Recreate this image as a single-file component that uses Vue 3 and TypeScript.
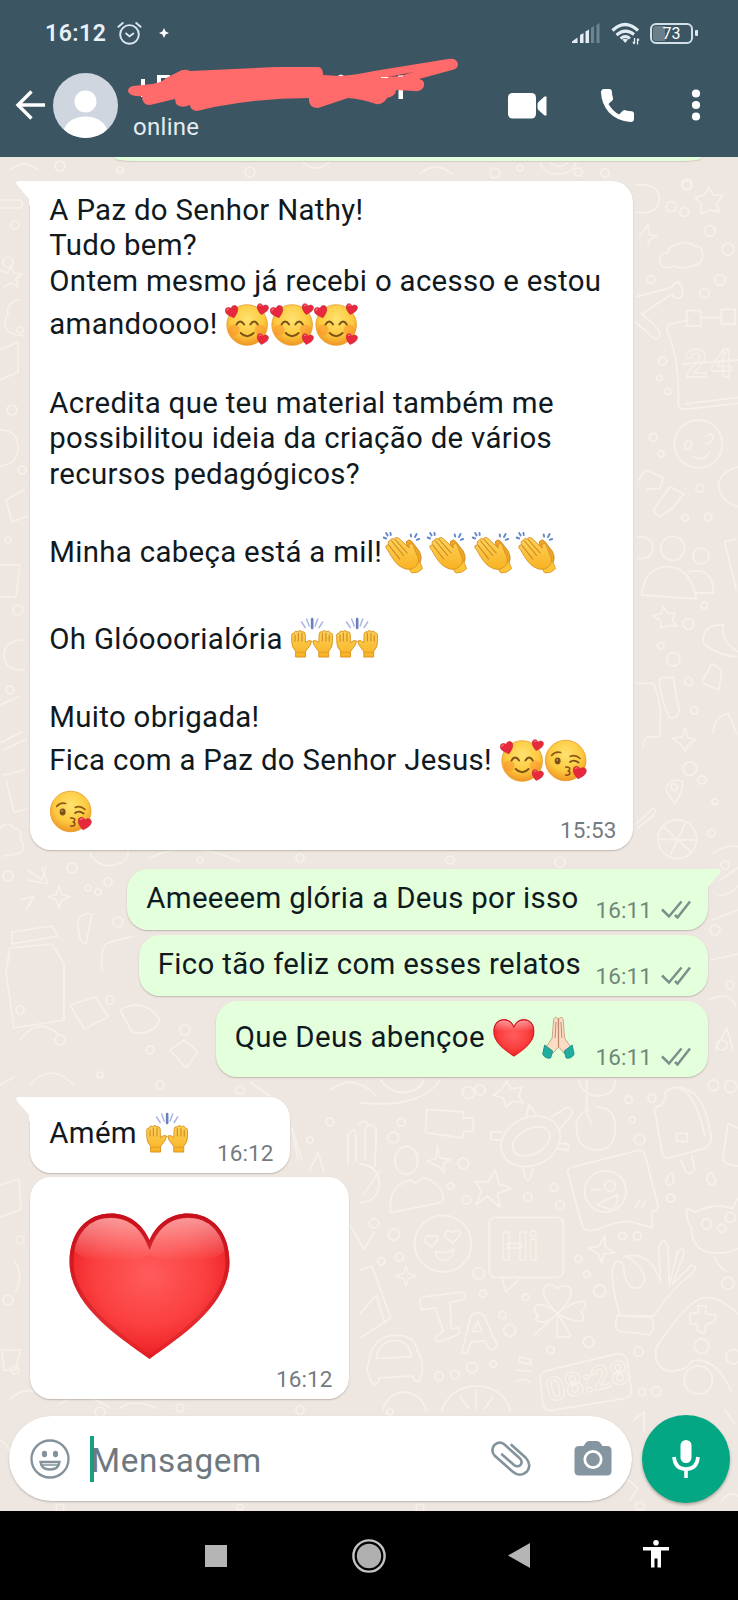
<script setup lang="ts">
type Emoji = 'love' | 'kiss' | 'clap' | 'raise' | 'heart' | 'pray'
interface Line {
  text?: string
  emojis?: Emoji[]
  tight?: boolean
}
interface Message {
  id: string
  out: boolean
  tail: boolean
  time: string
  lines: Line[]
}

const messages: Message[] = [
  {
    id: 'm1', out: false, tail: true, time: '15:53',
    lines: [
      { text: 'A Paz do Senhor Nathy!' },
      { text: 'Tudo bem?' },
      { text: 'Ontem mesmo já recebi o acesso e estou' },
      { text: 'amandoooo!', emojis: ['love', 'love', 'love'] },
      {},
      { text: 'Acredita que teu material também me' },
      { text: 'possibilitou ideia da criação de vários' },
      { text: 'recursos pedagógicos?' },
      {},
      { text: 'Minha cabeça está a mil!', emojis: ['clap', 'clap', 'clap', 'clap'], tight: true },
      {},
      { text: 'Oh Glóooorialória', emojis: ['raise', 'raise'] },
      {},
      { text: 'Muito obrigada!' },
      { text: 'Fica com a Paz do Senhor Jesus!', emojis: ['love', 'kiss'] },
      { emojis: ['kiss'], tight: true },
    ],
  },
  { id: 'm2', out: true, tail: true, time: '16:11', lines: [{ text: 'Ameeeem glória a Deus por isso' }] },
  { id: 'm3', out: true, tail: false, time: '16:11', lines: [{ text: 'Fico tão feliz com esses relatos' }] },
  { id: 'm4', out: true, tail: false, time: '16:11', lines: [{ text: 'Que Deus abençoe', emojis: ['heart', 'pray'] }] },
  { id: 'm5', out: false, tail: true, time: '16:12', lines: [{ text: 'Amém', emojis: ['raise'] }] },
]

const dots: [number, number, number][] = [
  [15, 225, 4], [8, 262, 5], [20, 330, 3], [12, 410, 5], [22, 470, 4], [8, 540, 3], [18, 610, 5], [10, 690, 4],
  [72, 868, 5], [8, 876, 5], [108, 882, 4], [88, 888, 3], [98, 892, 3], [118, 922, 5], [20, 1010, 4], [60, 1040, 5],
  [110, 1000, 4], [150, 1050, 4], [185, 1030, 5], [100, 1075, 3], [160, 1085, 4], [240, 1090, 4], [330, 1122, 4],
  [310, 1140, 3], [15, 1370, 4], [8, 1300, 5], [20, 1240, 4], [60, 166, 5], [120, 170, 3], [250, 172, 5],
  [495, 173, 5], [520, 168, 3], [578, 172, 4], [605, 173, 4], [687, 184, 5], [725, 865, 4], [715, 930, 5],
  [730, 985, 4], [722, 1045, 5], [450, 860, 4], [200, 860, 3], [300, 858, 4], [560, 862, 5], [480, 1090, 5],
  [100, 1412, 5], [180, 1408, 4], [300, 1410, 4], [390, 1412, 3], [60, 1508, 4], [240, 1507, 3], [420, 1508, 4], [640, 1506, 4],
]
</script>

<template>
  <div class="screen">
    <svg class="defs" width="0" height="0" aria-hidden="true">
      <defs>
        <radialGradient id="gFace" cx=".5" cy=".35" r=".68">
          <stop offset="0" stop-color="#ffe370" /><stop offset=".6" stop-color="#fdc93f" /><stop offset="1" stop-color="#ee8f22" />
        </radialGradient>
        <linearGradient id="gHand" x1="0" y1="0" x2="0" y2="1">
          <stop offset="0" stop-color="#fdd35c" /><stop offset="1" stop-color="#f8b222" />
        </linearGradient>
        <radialGradient id="gHeart" cx=".5" cy=".42" r=".62">
          <stop offset="0" stop-color="#ff5c5c" /><stop offset=".55" stop-color="#fb4040" /><stop offset=".85" stop-color="#ee2529" /><stop offset="1" stop-color="#c51a20" />
        </radialGradient>
        <linearGradient id="gShine" x1="0" y1="0" x2="0" y2="1">
          <stop offset="0" stop-color="#fff" stop-opacity=".5" /><stop offset="1" stop-color="#fff" stop-opacity="0" />
        </linearGradient>
        <linearGradient id="gRim" x1="0" y1="0" x2="0" y2="1">
          <stop offset="0" stop-color="#c5101b" /><stop offset=".3" stop-color="#c5101b" stop-opacity=".7" /><stop offset=".7" stop-color="#b81820" stop-opacity=".35" /><stop offset="1" stop-color="#c5101b" stop-opacity=".2" />
        </linearGradient>
        <clipPath id="heartClip"><path d="M80.500 146 C48 123 .5 91 .5 49 C.5 19 18 .5 42 .5 C59 .5 73 10 80.500 27 C88 10 102 .5 119 .5 C143 .5 160.500 19 160.500 49 C160.500 91 113 123 80.500 146Z" /></clipPath>
        <symbol id="miniHeart" viewBox="0 0 14 14">
          <path d="M7 13 C3 10 .6 7.5 .6 4.5 C.6 1 5.3 .2 7 3.4 C8.700 .2 13.400 1 13.400 4.500 C13.400 7.500 11 10 7 13Z" fill="#e8283c" stroke="#b91e2e" stroke-width=".5" />
          <path d="M2.300 4.300 Q3 2.300 5 2.900" fill="none" stroke="#ff7d86" stroke-width="1" />
        </symbol>
        <symbol id="love" viewBox="0 0 44 44">
          <circle cx="22" cy="22" r="20.300" fill="url(#gFace)" stroke="#e79a2a" stroke-width=".8" />
          <circle cx="9" cy="27" r="5.500" fill="#fb8a2a" opacity=".45" /><circle cx="35" cy="27" r="5.500" fill="#fb8a2a" opacity=".45" />
          <path d="M11.300 21.500 Q15 15.500 19 21.500 M25.200 21.500 Q29 15.500 32.700 21.500" fill="none" stroke="#7b5218" stroke-width="1.900" stroke-linecap="round" />
          <path d="M15.500 30 Q22 36.500 28.500 30" fill="none" stroke="#7b5218" stroke-width="1.900" stroke-linecap="round" />
          <use href="#miniHeart" x="0" y="2" width="14" height="14" transform="rotate(-18 7 9)" />
          <use href="#miniHeart" x="31" y="0" width="12.500" height="12.500" transform="rotate(14 37 6)" />
          <use href="#miniHeart" x="31" y="30" width="12.500" height="12.500" transform="rotate(14 37 36)" />
        </symbol>
        <symbol id="kiss" viewBox="0 0 44 44">
          <circle cx="21.500" cy="21.500" r="20.300" fill="url(#gFace)" stroke="#e79a2a" stroke-width=".8" />
          <path d="M7.500 16.500 Q11 12 16.500 13.500 M26 17.500 Q31 15 36 19.500" fill="none" stroke="#8a5a15" stroke-width="1.600" stroke-linecap="round" />
          <ellipse cx="13.500" cy="22" rx="3" ry="3.400" fill="#7b5218" /><circle cx="13" cy="21" r="1" fill="#c09350" />
          <path d="M26 23 Q29.500 20 34.500 23.500" fill="none" stroke="#7b5218" stroke-width="1.900" stroke-linecap="round" />
          <path d="M21.500 28 Q26.500 28 25.500 30.500 Q25 32 23.500 32 Q26.500 32.500 25.500 35 Q24.500 36.500 21.500 36" fill="none" stroke="#8b4c15" stroke-width="1.500" stroke-linecap="round" />
          <use href="#miniHeart" x="28" y="26.500" width="14.500" height="14.500" transform="rotate(12 35 33)" />
        </symbol>
        <symbol id="clap" viewBox="0 0 44 44">
          <path d="M24 11 Q27 7 30 11 L37 20 Q41 28 37 33 L30 34Z" fill="#efa622" stroke="#cf861c" stroke-width=".9" />
          <path d="M31.500 33 L37 29.500 L40.500 37.500 Q36 42.500 30 42 Q27 40.500 28 37.500Z" fill="#fcc437" stroke="#d99122" stroke-width=".8" />
          <path d="M5.500 19 Q2 15.500 5 14 L6.500 14 Q5 10 8 9.500 Q9 6.500 12 8 Q13.500 5 17 7.500 L27 17 Q26.500 11 30.500 13 L34 22 Q39 31 33.500 35.500 Q27 41 19 36 Q13 33 5.500 19Z" fill="url(#gHand)" stroke="#d99122" stroke-width=".9" />
          <path d="M7 14.500 L17.500 28 M9.500 10 L21.500 24.500 M13 8.500 L25 22" fill="none" stroke="#cc8520" stroke-width="1.100" stroke-linecap="round" />
          <path d="M1.500 6.500 l2.500 1 M4 2 l1.500 2.500 M8.300 2 l.3 2 M28.500 3.500 l.5 2 M34.500 3 l-1.700 3 M37 8 l-2.500 .8" stroke="#6387cb" stroke-width="1.900" stroke-linecap="round" />
        </symbol>
        <symbol id="raisedHand" viewBox="0 0 20 30" preserveAspectRatio="none">
          <path d="M4.500 29 L4.500 23 Q1 19 1 13 L1 6 Q1.200 4 3 4.500 L3.600 3 Q4.500 1.500 6.500 2.700 Q8.500 .4 10.300 2.800 Q13 2.500 13.200 5 L13.500 14 Q17 10.500 19 12.500 Q18.500 17 15 21 L13.500 23.500 L13.500 29Z" fill="url(#gHand)" stroke="#d8921f" stroke-width=".9" />
          <path d="M4 6 V13 M7 4 V13 M10.300 4 V13" stroke="#d08a20" stroke-width="1" />
          <path d="M4.500 24 H13.500" stroke="#e29c24" stroke-width="1" />
        </symbol>
        <symbol id="raise" viewBox="0 0 44 44">
          <use href="#raisedHand" x=".5" y="12" width="22" height="29" />
          <use href="#raisedHand" x=".5" y="12" width="22" height="29" transform="translate(44 0) scale(-1 1)" />
          <path d="M11.500 5 L15 10.500 M16.500 2 L19 9 M32.500 5 L29 10.500 M27.500 2 L25 9" stroke="#a9b7e0" stroke-width="1.500" stroke-linecap="round" />
          <path d="M22 2 V11" stroke="#6a7fbd" stroke-width="2.600" stroke-linecap="round" />
        </symbol>
        <symbol id="bigHeart" viewBox="0 0 161 147" preserveAspectRatio="none">
          <g clip-path="url(#heartClip)">
            <rect width="161" height="147" fill="url(#gHeart)" />
            <path d="M80.500 34 C73 16 60 5 42 5 C20 5 8 16 5 36 C10 52 65 50 80.500 42 C96 50 151 52 156 36 C153 16 141 5 119 5 C101 5 88 16 80.500 34Z" fill="url(#gShine)" />
            <path d="M80.500 146 C48 123 .5 91 .5 49 C.5 19 18 .5 42 .5 C59 .5 73 10 80.500 27 C88 10 102 .5 119 .5 C143 .5 160.500 19 160.500 49 C160.500 91 113 123 80.500 146Z" fill="none" stroke="url(#gRim)" stroke-width="8" />
          </g>
        </symbol>
        <symbol id="heart" viewBox="0 0 44 44">
          <use href="#bigHeart" x="1" y="3" width="41.500" height="38" />
        </symbol>
        <symbol id="pray" viewBox="0 0 44 44">
          <path d="M21 3 Q18 -.5 16.500 3.500 L15 22 L9 31 L15 38 L21.500 31Z" fill="#fbdcc4" stroke="#c99b7d" stroke-width=".9" />
          <path d="M21.500 3 Q24.500 -.5 26 3.500 L27.500 22 L33.500 31 L27.500 38 L21.500 31Z" fill="#fbdcc4" stroke="#c99b7d" stroke-width=".9" />
          <path d="M21.300 2.500 V31 M18.800 6 L18 22 M23.800 6 L24.700 22" stroke="#b98266" stroke-width=".9" />
          <path d="M7.500 29 L15.500 35 L13.500 42 Q8 43 5.500 38Z M35 29 L27 35 L29 42 Q34.500 43 37 38Z" fill="#1faea0" stroke="#12867d" stroke-width=".8" />
        </symbol>
        <symbol id="spark" viewBox="0 0 24 24">
          <path d="M12 1 L14.500 9 L23 12 L14.500 15 L12 23 L9.500 15 L1 12 L9.500 9Z" fill="none" stroke="#f6f0ea" stroke-width="1.600" stroke-linejoin="round" />
        </symbol>
      </defs>
    </svg>

    <header class="top">
      <div class="status">
        <span class="clock">16:12</span>
        <svg class="alarm" viewBox="0 0 26 26" fill="none" stroke="#dce8f2" stroke-width="2" stroke-linecap="round">
          <circle cx="13" cy="14" r="9.700" /><path d="M1.500 6 L6 2 M24.500 6 L20 2 M9.500 13 L13 16 L17 13" />
        </svg>
        <svg class="star" viewBox="0 0 10 10"><path d="M5 0 L6.600 3.400 L10 5 L6.600 6.600 L5 10 L3.400 6.600 L0 5 L3.400 3.400Z" fill="#fff" /></svg>
        <span class="grow"></span>
        <svg class="signal" viewBox="0 0 28 21">
          <path d="M0 20 V18.500 L5.500 14.500 V20Z M8 20 V12 L11.500 10 V20Z M13.500 20 V8.500 L17 6.500 V20Z" fill="#e4edf3" />
          <path d="M19 20 V5 L22 3 V20Z M24.500 20 V2 L27.500 0 V20Z" fill="#6f8593" />
        </svg>
        <svg class="wifi" viewBox="0 0 29 24" fill="none" stroke="#e4edf3">
          <path d="M1.500 8.500 Q14 -3.500 27 8.500" stroke-width="3.200" /><path d="M5.500 13 Q14.500 5.500 23 12.500" stroke-width="3" />
          <path d="M9.500 16.500 Q14.500 12.500 19 16.500" stroke-width="2.700" /><path d="M11.300 17.500 Q14.300 16 17 17.500 L14.200 21Z" fill="#e4edf3" stroke="none" />
          <path d="M23.500 16 V21.500 M22 20 l1.500 2 M26.500 22.500 V17 M28 18.500 l-1.500 -2" stroke-width="1.300" />
        </svg>
        <div class="battery"><span>73</span></div>
      </div>

      <div class="bar">
        <svg class="back" viewBox="0 0 30 30" fill="none" stroke="#fff" stroke-width="3.400"><path d="M30 15 H3 M16.500 1.500 L3 15 L16.500 28.500" /></svg>
        <svg class="avatar" viewBox="0 0 65 65">
          <clipPath id="round"><circle cx="32.500" cy="32.500" r="32.500" /></clipPath>
          <g clip-path="url(#round)"><rect width="65" height="65" fill="#cfd6df" /><circle cx="32.500" cy="28.500" r="11" fill="#fff" /><ellipse cx="32.500" cy="60" rx="22" ry="16.500" fill="#fff" /></g>
        </svg>
        <span class="online">online</span>
        <svg class="video" viewBox="0 0 39 26" fill="#fff"><rect width="28" height="25.500" rx="4.500" /><path d="M29.500 11 Q29.500 9.500 31 8.500 L36.500 3.500 H38.500 V22.500 H36.500 L31 17.500 Q29.500 16.500 29.500 15Z" /></svg>
        <svg class="phone" viewBox="0 0 33 33" fill="#fff"><path d="M3 0 H8.500 Q10.500 0 10.800 2 Q11 6 12 9 Q12.300 10.500 11.300 11.500 L7.500 15 Q11.500 22 18 25.500 L21.800 21.800 Q23 20.800 24.300 21.200 Q27 22 31 22.300 Q33 22.500 33 24.500 V30 Q33 33 29.500 33 Q16 32 8 23.500 Q.5 15 0 3.500 Q0 0 3 0Z" /></svg>
        <svg class="more" viewBox="0 0 10 32" fill="#fff"><circle cx="5" cy="4.500" r="4.100" /><circle cx="5" cy="16" r="4.100" /><circle cx="5" cy="27.500" r="4.100" /></svg>
      </div>

      <svg class="scribble" viewBox="0 0 738 157">
        <path d="M141 79 h4 v8 h-4z M157 75 h13 v3 h-9 v6 h-4z M336 78 q5 -7 10 0z M398.500 86 h4.500 v13 h-4.500z M141 95 h3 v2 h-3z" fill="#fff" />
        <path d="M133 86 L152 84 Q163 82 166 78 L178 72 Q184 68 190 71 L275 67 H319 Q323 68 323 75 L340 76 Q356 75 374 71 L448 59 Q457 58 458 64 Q458 69 452 70 L419 79 Q425 80 424 86 Q422 92 414 91 L396 90 Q396 96 387 98 Q383 105 376 104 Q362 99 348 98 L318 108 Q308 108 309 98 Q260 98 214 107 L197 111 Q190 110 190 105 Q181 109 176 104 L175 99 L150 105 Q142 105 142 96 Q129 97 128 91 Q128 87 133 86Z" fill="#ff6a6a" />
        <path d="M388 77 L414 72 L399 76Z" fill="#2c3f4b" /><path d="M381 77.500 h7 M398 76 h5" stroke="#fff" stroke-width="1" />
      </svg>
    </header>

    <main class="chat">
      <svg class="wall" viewBox="0 157 738 1354" preserveAspectRatio="none" fill="none" stroke="#f6f0ea" stroke-linecap="round" stroke-linejoin="round">
        <g stroke-width="1.700">
          <circle v-for="(d, i) in dots" :key="i" :cx="d[0]" :cy="d[1]" :r="d[2]" />
          <path d="M420 174 q15 -14 32 0 M540 160 q2 14 18 14 q17 0 18 -14 M550 162 q9 9 18 0 M300 160 q16 16 32 0 M10 170 q14 -12 28 0" />
          <path d="M0 208 h20 q5 -4 0 -8 h-20 M0 270 l8 3 l3 -7 l3 7 l8 1 l-6 5 l2 8 l-7 -4 l-7 4 M20 300 q-14 2 -12 14 q-8 12 4 20 l12 2 M0 350 l18 -8 v30 l-18 8 M0 430 q18 0 18 18 q0 16 -18 18 M24 490 l-18 10 l6 22 l16 -6 M0 565 h20 l-4 32 h-16 M24 640 q-20 0 -20 16 q0 14 20 14 M0 705 l20 -9 M2 742 l20 -10 M4 750 l22 -11 M3 775 l22 -5 M6 780 l8 32 l14 -3 M0 828 q8 -8 14 0 q10 2 6 12 q8 8 -2 14 l-14 2" />
          <path d="M28 870 l14 10 l4 -14 M28 880 l20 4 l-6 -16 M20 900 l14 -4 l-8 14 M90 854 q10 16 28 10 q12 -4 10 -14 M150 858 q40 -20 90 4 M78 920 q4 -8 14 -6 l-6 30 q-8 0 -8 -24z M12 932 l40 -6 l6 10 l-46 8z M10 948 l42 -4 l12 20 v56 l-50 8 l-8 -56z M102 970 q-2 -26 8 -28 l24 -6 M20 1040 q18 -24 38 -6 M70 1005 l26 -8 l12 20 l-24 12z M120 1010 q24 -14 40 10 q-8 16 -28 12z M170 1050 l14 -10 l14 12 l-12 16z M0 1085 l14 -8 M30 1085 q20 -24 44 0 M330 1090 q24 -18 46 6 M250 1082 l20 14" />
          <path d="M298 1160 l-6 -32 l10 32 M310 1170 l8 -18 l6 20 M348 1165 v-30 q6 -10 8 0 v26 m2 -36 q8 -8 10 0 M0 1185 l19 -6 l2 30 l-20 8 M14 1260 q10 14 2 32 M2 1350 h18 l-4 20 h-12z M10 1400 q14 -16 36 -4 M60 1404 q22 -16 50 4 M120 1408 q14 -10 36 0 M380 1170 l-16 24 M350 1225 l14 24 l10 -16" />
          <path d="M720 880 l18 -12 M718 896 q14 -2 20 -10 M712 920 l26 -10 M710 960 l28 -6 M710 1000 q18 -10 26 6 M715 1050 l12 -22 l6 22" />
          <path d="M0 1440 q14 8 10 30 M634 1420 l10 -8 v20 M628 1480 l10 8 l-8 12 M725 1410 l10 14 M722 1500 q8 -10 16 -4" />
        </g>
        <g transform="translate(370 180) scale(.3333)" stroke-width="5.400">
          <path d="M800 15 q70 -5 68 45 q-5 45 -70 37 M1015 22 l15 22 l28 2 l-18 25 l8 25 l-30 -6 l-24 12 v-30 l-18 -20 l28 -8z M810 165 l24 -30 l4 30 l22 2 l-20 12 l-6 20 M870 245 q-5 -25 25 -28 q-2 -20 30 -25 q30 -12 45 5 q30 0 28 30 q0 25 -38 33 q-15 8 -50 -2 q-35 15 -40 -13z M800 350 l105 -28 q10 -20 22 -15 q15 18 10 40 q-16 18 -32 -4 l-90 60 q60 45 55 66 q-12 18 -35 -10 l-40 -33 M890 450 q0 -18 20 -20 l48 -10 M992 412 h58 M950 392 h42 v46 h-42z M1054 388 h42 v44 h-42z M890 450 q40 90 35 220 q0 18 18 18 l160 -18 M936 552 l168 -12 M946 672 l158 -20" />
          <text x="944" y="590" font-size="118" stroke-width="4" letter-spacing="10">24</text>
          <circle cx="985" cy="792" r="72" /><path d="M945 790 q10 -18 22 0 q0 16 -22 18z M1008 770 q18 -18 22 6 q-8 16 -24 14 M970 830 q30 18 48 -12 M1104 860 q-60 20 -58 60 q10 50 58 60 M806 900 l20 -30 l54 22 l-10 34 l-40 2 M850 990 l50 -70 l42 22 l-36 44 l-40 26z" />
          <circle cx="951" cy="16" r="14" /><circle cx="903" cy="80" r="15" /><circle cx="943" cy="96" r="13" /><circle cx="1020" cy="153" r="16" /><circle cx="1074" cy="208" r="18" /><circle cx="1050" cy="300" r="16" /><circle cx="1003" cy="340" r="14" /><circle cx="843" cy="298" r="12" /><circle cx="878" cy="543" r="12" /><circle cx="868" cy="594" r="8" /><circle cx="893" cy="634" r="9" /><circle cx="850" cy="772" r="12" /><circle cx="873" cy="822" r="9" /><circle cx="990" cy="925" r="12" /><circle cx="946" cy="1014" r="10" /><circle cx="1015" cy="1011" r="11" />
        </g>
        <g transform="translate(370 500) scale(.3333)" stroke-width="5.400">
          <circle cx="908" cy="145" r="36" /><circle cx="993" cy="168" r="24" /><path d="M805 110 q44 0 44 35 q-5 35 -44 30 M815 285 q10 -85 78 -85 q70 4 86 96 q-80 -4 -164 -11z M960 215 q70 -14 70 64 h-50 M1064 125 l35 -8 M1064 125 l35 145 M880 320 l12 20 l22 -2 l-6 22 l10 18 l-24 -2 l-20 8 l-2 -22 l-22 -14 l24 -8z M1000 430 q-4 -60 60 -55 q-10 50 44 80 M1000 430 q50 40 100 40 M1000 540 l25 -50 l30 20 l-8 60 l-48 -20 M795 550 h55 q30 60 18 160 h-28 q-20 0 -20 30 M868 545 q0 -10 12 -12 l30 -2 q10 70 18 100 q-6 28 -30 22 q-24 -50 -30 -108z M1030 700 q0 -50 45 -60 l25 60 M905 715 l32 -4 l8 -28 l8 30 l24 6 l-24 16 l-6 20 l-12 -20z M888 870 q10 -40 50 -26 q0 40 -24 66z M800 970 l50 -46 q12 6 -2 24 l-44 36" />
          <circle cx="922" cy="1018" r="58" /><path d="M880 980 l84 76 M868 1018 l106 2 M946 970 l-44 94 M1030 1060 q40 -30 74 -20" />
          <circle cx="955" cy="372" r="16" /><circle cx="910" cy="478" r="20" /><circle cx="872" cy="437" r="10" /><circle cx="956" cy="545" r="12" /><circle cx="973" cy="631" r="11" /><circle cx="960" cy="806" r="20" /><circle cx="996" cy="840" r="12" /><circle cx="1003" cy="316" r="10" /><circle cx="1024" cy="1000" r="11" /><circle cx="1035" cy="905" r="9" /><circle cx="912" cy="862" r="10" />
        </g>
        <g transform="translate(360 1080) scale(.3333)" stroke-width="5.400">
          <path d="M0 68 q180 20 240 -68 M62 0 q30 44 80 36 q44 -10 48 -36 M200 88 l110 8 v18 h30 v40 h-28 l-4 20 l-112 -16z M400 46 l24 -18 l16 -24 l14 22 l32 -4 l-10 26 l14 20 l-32 -4 l-20 18 l-8 -28z" />
          <circle cx="325" cy="38" r="18" /><circle cx="124" cy="127" r="12" /><circle cx="100" cy="172" r="16" /><ellipse cx="139" cy="241" rx="34" ry="42" />
          <path d="M92 398 q-10 -80 60 -98 l14 10 l22 -18 q62 20 62 66 l-8 10z M15 240 v-90 q14 -32 34 0 l-4 110 M0 252 q56 4 58 60 q-4 52 -58 56" />
          <ellipse cx="512" cy="184" rx="92" ry="72" transform="rotate(-25 512 184)" /><ellipse cx="514" cy="184" rx="60" ry="38" transform="rotate(-28 514 184)" />
          <path d="M425 182 l-32 -4 v-22 h30 M500 105 l6 -30 l22 26 M575 110 l45 -28 q22 2 14 24 l-36 42 M598 190 l28 2 v18 l-34 -4 M490 266 q10 70 30 2 M655 0 q10 44 60 48 q52 -4 50 -48 M680 0 v96 l14 36 M688 90 q-46 14 -38 60 q4 60 66 60 q56 -6 50 -80 q-8 -52 -60 -48" />
          <path d="M886 100 q-10 -20 18 -24 l14 -24 q-10 -26 32 -30 q80 0 100 130 q12 40 -18 54 l-104 28 q-20 2 -22 -20z M960 26 q50 20 74 140 M962 240 l16 36 q20 8 26 -6 l-8 -44 M950 160 h32 v24 h-32z" />
          <path d="M624 280 q-6 -16 18 -20 l190 -48 q20 -4 24 16 l38 150 q2 14 -20 18 l4 48 l-70 -20 q-40 0 -84 20 q-50 20 -58 -10z M345 304 l40 2 l20 -38 l12 44 l38 14 l-42 14 l6 42 l-36 -34 l-34 26 l16 -42z M200 244 l28 -8 l4 -38 l8 36 l32 4 l-22 14 l2 26 l-16 -18z" />
          <circle cx="736" cy="334" r="62" /><circle cx="750" cy="318" r="16" /><path d="M695 328 h26 M712 374 q30 -16 60 -30 q4 40 -24 44z M826 384 l14 -24 M844 384 l14 -24" />
          <circle cx="249" cy="491" r="85" /><path d="M195 486 q0 -28 20 -16 q20 -10 18 8 l-18 24z M254 470 q6 -28 22 -12 q22 -16 26 4 l-22 28z M226 514 q30 10 56 -6 q-8 34 -32 34 q-24 -4 -24 -28z" />
          <rect x="388" y="412" width="222" height="180" rx="18" /><path d="M424 592 l14 44 l38 -38" /><text x="422" y="540" font-size="116" stroke-width="4">Hi</text>
          <path d="M180 668 q0 -18 20 -18 l108 -14 q14 12 0 24 l-38 8 l4 78 l22 -2 q10 16 -8 22 l-48 20 q-18 0 -14 -16 l24 -16 l-24 -70 l-40 6z M306 818 l26 -110 q20 -20 40 0 l38 84 q2 18 -22 16 l-14 -26 l-40 4 l-14 36z M338 754 l16 -30 l10 30z" />
          <path d="M592 700 q-60 -60 -34 -84 q20 -8 34 10 q20 -18 40 0 q8 30 -40 74z M592 700 q60 -44 84 -34 q2 20 -14 28 q18 20 0 30 q-30 0 -70 -24z M592 700 q-50 -40 -66 -20 q-8 20 10 26 q-18 14 4 20 q30 2 52 -26z M592 700 l40 66 q-10 10 -26 4 l-14 4z M592 700 l-70 66" />
          <path d="M780 706 q-40 -140 -10 -162 q24 -2 22 34 q10 50 40 46 q40 -14 6 -64 q-30 -30 -46 -30 q80 -20 110 76 l-6 -100 q12 -40 28 -8 l4 120 l24 -100 q20 -24 20 4 l-34 90 l56 -56 q24 0 0 28 q-50 30 -112 124z M772 706 l104 8 q12 30 -8 50 l-90 -10 q-18 -10 -6 -48z M685 504 l32 -4 l18 -34 v34 l30 18 l-34 4 l-6 28 l-10 -28z" />
          <path d="M980 390 q-6 -10 26 6 q60 -30 110 -10 l18 -30 M980 390 q0 40 14 50 q0 80 80 80 q30 0 60 -14 M1064 530 q10 30 36 44" /><circle cx="1040" cy="432" r="15" /><circle cx="1111" cy="412" r="15" /><circle cx="1086" cy="445" r="12" />
          <path d="M890 800 q100 -150 150 -148 q50 4 94 50 M890 800 q-14 66 44 74 q50 -4 60 -30 q70 -20 120 90 M990 700 l24 -2 v-20 h24 v24 l28 2 v20 l-28 10 l-4 26 l-22 -8 l2 -18 l-24 -4z" /><circle cx="1025" cy="798" r="22" /><circle cx="1120" cy="830" r="22" /><circle cx="1015" cy="900" r="42" /><circle cx="1104" cy="610" r="18" />
          <path d="M20 870 l14 -56 q20 -50 80 -48 q50 0 60 50 q16 20 12 62 l-8 24 q-14 10 -20 -14 l-100 6 q-8 30 -24 12z M48 836 q10 -56 60 -54 q40 4 46 48z M68 990 q20 -54 66 -54 q50 6 64 54 M246 990 q26 -70 106 -72 q80 6 98 72 M346 930 l4 60 M300 950 l28 36 M400 950 l-26 36 M0 570 l36 -12 l56 156 l-92 60 M0 700 l50 -54 l24 84" />
          <path d="M540 890 q0 -10 20 -18 l210 -50 q26 -4 32 20 l12 90 q0 20 -22 24 l-220 36 q-20 0 -24 -24z M480 830 l32 10 v14 l-34 -8z M468 870 l42 4 M468 904 q30 -12 40 2" /><text x="568" y="966" font-size="98" stroke-width="4" transform="rotate(-14 568 966)">08:28</text>
          <circle cx="310" cy="250" r="16" /><circle cx="272" cy="318" r="10" /><circle cx="319" cy="359" r="13" /><circle cx="102" cy="464" r="17" /><circle cx="42" cy="430" r="14" /><circle cx="64" cy="544" r="11" /><circle cx="118" cy="531" r="12" /><circle cx="356" cy="580" r="17" /><circle cx="369" cy="641" r="11" /><circle cx="428" cy="705" r="11" /><circle cx="449" cy="751" r="18" /><circle cx="336" cy="863" r="16" /><circle cx="285" cy="884" r="13" /><circle cx="237" cy="889" r="13" /><circle cx="400" cy="852" r="10" /><circle cx="497" cy="652" r="10" /><circle cx="600" cy="376" r="14" /><circle cx="582" cy="322" r="12" /><circle cx="503" cy="352" r="13" /><circle cx="839" cy="178" r="16" /><circle cx="817" cy="119" r="9" /><circle cx="806" cy="59" r="11" /><circle cx="876" cy="55" r="12" /><circle cx="787" cy="468" r="11" /><circle cx="832" cy="468" r="12" /><circle cx="655" cy="537" r="11" /><circle cx="680" cy="583" r="10" /><circle cx="719" cy="633" r="18" /><circle cx="686" cy="786" r="16" /><circle cx="572" cy="810" r="11" /><circle cx="836" cy="815" r="14" /><circle cx="889" cy="934" r="14" /><circle cx="846" cy="936" r="11" /><circle cx="932" cy="354" r="12" /><circle cx="1060" cy="16" r="16" /><circle cx="1112" cy="20" r="18" />
          <path d="M918 300 q20 -36 22 -10 q4 34 -20 24z M1040 300 q8 -40 22 -8 q14 24 -12 22z M1104 130 l30 14 M1104 130 l-16 110 q10 16 46 18" />
        </g>
        <use href="#spark" x="47" y="885" width="24" height="24" />
        <use href="#spark" x="395" y="1265" width="22" height="22" />
      </svg>

      <div class="peek"></div>

      <div class="list">
        <article v-for="m in messages" :key="m.id" class="bubble" :class="[m.id, m.out ? 'out' : 'in']">
          <svg v-if="m.tail" class="tail" viewBox="0 0 24 24"><path d="M24 0 H2 Q-1 1 1 4 L13 18 V24 H24Z" /></svg>
          <div class="body">
            <div v-for="(l, i) in m.lines" :key="i" class="line" :class="{ tall: l.emojis, tight: l.tight }">
              <span v-if="l.text">{{ l.text }}</span>
              <span v-if="l.emojis" class="emojis">
                <svg v-for="(e, j) in l.emojis" :key="j" class="emoji"><use :href="'#' + e" /></svg>
              </span>
            </div>
          </div>
          <div class="meta">
            <span>{{ m.time }}</span>
            <svg v-if="m.out" class="ticks" viewBox="0 0 30 19" fill="none" stroke="#7b8f8c" stroke-width="2.500"><path d="M1 9.500 L8 16.500 L20.500 1.500 M14 15 L16.500 17.500 L29 1.500" /></svg>
          </div>
        </article>
        <article class="bubble in sticker">
          <svg class="big"><use href="#bigHeart" /></svg>
          <div class="meta"><span>16:12</span></div>
        </article>
      </div>

      <div class="composer">
        <div class="field">
          <svg class="smile" viewBox="0 0 40 40" fill="none" stroke="#82919a" stroke-width="2.300">
            <circle cx="20" cy="20" r="18.500" /><ellipse cx="14.500" cy="15" rx="2.600" ry="3.200" fill="#82919a" stroke="none" /><ellipse cx="25.500" cy="15" rx="2.600" ry="3.200" fill="#82919a" stroke="none" /><path d="M10.500 23 H29.500 Q28.500 30.500 20 30.500 Q11.500 30.500 10.500 23Z" /><path d="M12 26 H28" stroke-width="1.500" />
          </svg>
          <span class="caret"></span>
          <span class="hint">Mensagem</span>
          <span class="grow"></span>
          <svg class="clip" viewBox="0 0 40 36" fill="none" stroke="#84939c" stroke-width="2.600" stroke-linecap="round">
            <path d="M20.500 4 L35 17 Q41 24 36 30.500 Q29 37 21.500 30.500 L3.500 14.500 Q-.5 9.500 3 4.500 Q8 -.5 13.500 3.500 L29 17.500 Q32 21 29.500 24 Q26.500 26.500 23 24 L11 13.500" />
          </svg>
          <svg class="camera" viewBox="0 0 38 35"><path d="M5 5 H9.500 L12 1.500 Q13 0 15 0 H23 Q25 0 26 1.500 L28.500 5 H33 Q37.500 5 37.500 9.500 V30 Q37.500 34.500 33 34.500 H5 Q.5 34.500 .5 30 V9.500 Q.5 5 5 5Z" fill="#8696a0" /><circle cx="19" cy="18.500" r="8.200" fill="none" stroke="#fff" stroke-width="2.700" /></svg>
        </div>
        <div class="mic">
          <svg viewBox="0 0 28 40" fill="none" stroke="#fff" stroke-width="3.600"><rect x="8.500" y="1" width="11" height="23" rx="5.500" fill="#fff" stroke="none" /><path d="M2 18 Q3 30 14 30 Q25 30 26 18 M14 30 V39" /></svg>
        </div>
      </div>
    </main>

    <nav class="nav">
      <i class="sq"></i>
      <svg class="home" viewBox="0 0 34 34"><circle cx="17" cy="17" r="15.600" fill="none" stroke="#c4c4c4" stroke-width="2.400" /><circle cx="17" cy="17" r="12.200" fill="#b0b0b0" /></svg>
      <svg class="tri" viewBox="0 0 22 25"><path d="M22 0 V25 L0 12.500Z" fill="#b5b5b5" /></svg>
      <svg class="a11y" viewBox="0 0 26 28" fill="#fff"><circle cx="13" cy="2.800" r="2.800" /><path d="M0 7 H26 V10.500 H18 V27.500 H14.500 V18.500 H11.500 V27.500 H8 V10.500 H0Z" /></svg>
    </nav>
  </div>
</template>

<style>
body { margin: 0; }
</style>

<style scoped>
.screen { width: 738px; height: 1600px; overflow: hidden; display: flex; flex-direction: column; font-family: Roboto, "Liberation Sans", sans-serif; color: #10191e; position: relative; }
.defs { position: absolute; }
svg { display: block; flex: none; }
.grow { flex: 1; }
.top { height: 157px; background: #3b5563; position: relative; flex: none; }
.status { height: 66px; display: flex; align-items: center; padding: 0 40px 0 45px; box-sizing: border-box; }
.clock { font-size: 23px; font-weight: 600; color: #e9f1f8; letter-spacing: .5px; width: 61px; white-space: nowrap; }
.alarm { width: 25px; height: 25px; margin-left: 11px; }
.star { width: 10px; height: 10px; margin-left: 17px; }
.signal { width: 28px; height: 21px; margin-right: 11px; }
.wifi { width: 29px; height: 24px; margin: 2px 10px 0 0; }
.battery { width: 43px; height: 21px; box-sizing: border-box; border: 2.500px solid #d3e0e8; border-radius: 6px; position: relative; color: #fff; font-size: 16px; display: flex; align-items: center; justify-content: center; margin-right: 5px; background: linear-gradient(90deg, #6b7f8b 32%, transparent 32%) content-box; padding: 1px; }
.battery::after { content: ""; position: absolute; right: -6.500px; top: 5px; width: 2.500px; height: 6px; background: #dbe6ed; border-radius: 1px; }
.bar { height: 78px; display: flex; align-items: center; padding-left: 15px; }
.back { width: 30px; height: 30px; }
.avatar { width: 65px; height: 65px; margin-left: 8px; }
.online { font-size: 24px; color: #e4ecf1; margin: 44px 0 0 15px; width: 375px; letter-spacing: .3px; }
.video { width: 39px; height: 26px; margin-top: 1px; }
.phone { width: 33px; height: 33px; margin-left: 54px; margin-top: 1px; }
.more { width: 10px; height: 32px; margin-left: 57px; }
.scribble { position: absolute; left: 0; top: 0; width: 738px; height: 157px; }
.chat { flex: none; height: 1354px; background: #eee6e0; position: relative; display: flex; flex-direction: column; overflow: hidden; }
.wall { position: absolute; left: 0; top: 0; width: 738px; height: 1354px; font-family: Roboto, sans-serif; font-weight: 700; }
.peek { height: 4px; width: 586px; margin-left: 115px; flex: none; background: #e3fedb; border-radius: 0 0 18px 18px / 0 0 3px 3px; box-shadow: 0 1px 1px #d2cdc2; position: relative; }
.list { display: flex; flex-direction: column; padding: 19.500px 30px 0; height: 1255px; box-sizing: border-box; position: relative; flex: none; }
.bubble { position: relative; border-radius: 21px; box-shadow: 0 1px 1.500px rgba(90, 80, 70, .32); box-sizing: border-box; flex: none; }
.in { background: #fff; align-self: flex-start; }
.out { background: #e4ffdb; align-self: flex-end; }
.body { padding: 12.100px 0 0 19.300px; }
.line { height: 35.600px; display: flex; align-items: center; font-size: 29.400px; line-height: 35.600px; white-space: nowrap; letter-spacing: .32px; }
.tall { height: 50.600px; }
.emojis { display: flex; margin-left: 7.700px; }
.tight .emojis { margin-left: 0; }
.emoji { width: 44.300px; height: 44px; }
.tail { position: absolute; left: -14px; top: 0; width: 24px; height: 24px; fill: #fff; }
.out .tail { left: auto; right: -13px; transform: scaleX(-1); fill: #e4ffdb; }
.meta { position: absolute; right: 16.500px; bottom: 7px; display: flex; align-items: center; gap: 9px; font-size: 22.500px; line-height: 26px; color: #747b80; letter-spacing: .1px; }
.out .meta { color: #71877b; right: 17px; }
.ticks { width: 30px; height: 19px; margin-top: -1px; }
.m1 { width: 603px; height: 669px; border-top-left-radius: 0; }
.m2 { width: 581px; height: 61px; margin-top: 19.500px; border-top-right-radius: 0; }
.m3 { width: 569.500px; height: 61px; margin-top: 5px; }
.m4 { width: 492.500px; height: 76px; margin-top: 5px; }
.m5 { width: 260px; height: 76px; margin-top: 20px; border-top-left-radius: 0; }
.m4 .body, .m5 .body { padding-top: 11.700px; }
.sticker { width: 319px; height: 222px; margin-top: 4px; padding: 35.500px 0 0 39px; }
.sticker .meta { bottom: 7.500px; }
.big { width: 161px; height: 147px; }
.composer { display: flex; align-items: center; height: 89px; padding: 0 8px 0 9px; position: relative; margin-top: -2px; flex: none; }
.field { width: 623px; height: 85.500px; border-radius: 43px; background: #fff; box-shadow: 0 1px 2px rgba(90, 80, 70, .35); display: flex; align-items: center; box-sizing: border-box; padding: 0 20px 0 21px; }
.smile { width: 40px; height: 40px; }
.caret { width: 4px; height: 46px; background: #16a082; margin-left: 20px; }
.hint { font-size: 33.300px; color: #6d787f; margin: 3px 0 0 -3px; letter-spacing: .6px; }
.clip { width: 40px; height: 36px; margin-right: 43px; }
.camera { width: 38px; height: 35px; }
.mic { width: 88px; height: 88px; border-radius: 50%; background: #04a784; margin-left: 10px; box-shadow: 0 2px 3px rgba(90, 80, 70, .4); display: flex; align-items: center; justify-content: center; }
.mic svg { width: 28px; height: 40px; }
.nav { height: 89px; background: #000; display: flex; align-items: center; flex: none; padding-left: 205px; }
.sq { width: 22px; height: 22px; background: #b5b5b5; }
.home { width: 34px; height: 34px; margin-left: 125px; }
.tri { width: 22px; height: 25px; margin-left: 122px; }
.a11y { width: 26px; height: 28px; margin-left: 113px; margin-top: -3px; }
</style>
